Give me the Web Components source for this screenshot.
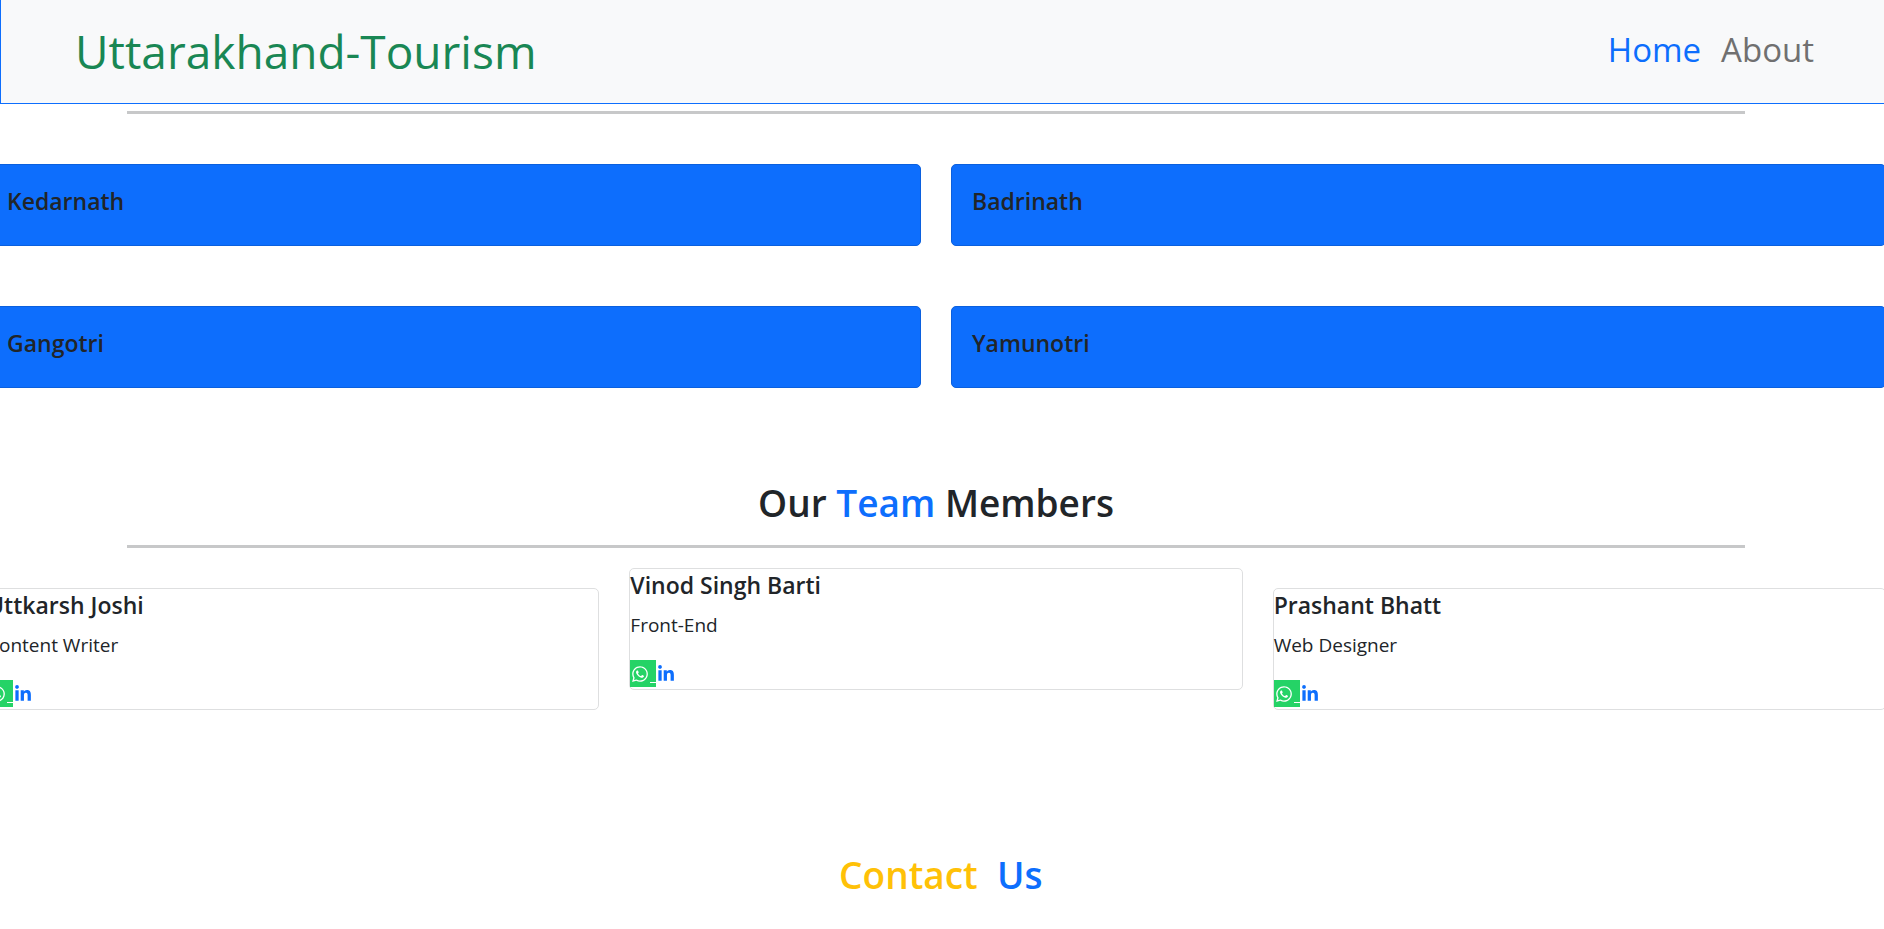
<!DOCTYPE html>
<html lang="en">
<head>
<meta charset="utf-8">
<title>Uttarakhand-Tourism</title>
<style>
  html { overflow-x: clip; background: #fff; }
  body {
    margin: 0;
    overflow-x: clip;
    color: #212529;
    font: 400 19px/30px "Open Sans", "Noto Sans", sans-serif;
    --blue: #0d6efd;
    --green: #198754;
    --yellow: #ffc107;
    --bleed: -14px;
    --gap: 30px;
  }
</style>
</head>
<body>

<template id="site-header">
  <style>
    :host { display: block; }
    header {
      display: flex;
      align-items: center;
      justify-content: space-between;
      padding: 14px 70px 14px 74px;
      background: #f8f9fa;
      border: solid var(--blue);
      border-width: 0 0 1px 1px;
    }
    a { text-decoration: none; }
    .brand { color: var(--green); font-size: 46px; line-height: 75px; }
    nav { display: flex; gap: 20px; padding-bottom: 4px; }
    ::slotted(a) { font-size: 33px; line-height: 50px; text-decoration: none; color: #707070; }
    ::slotted(a[aria-current]) { color: var(--blue); }
  </style>
  <header>
    <a class="brand" href="#">Uttarakhand-Tourism</a>
    <nav aria-label="Main"><slot></slot></nav>
  </header>
</template>

<template id="section-rule">
  <style>
    :host { display: block; padding: 0 127px; }
    hr { margin: 0; border: 0; height: 3px; background: #c7c8c9; }
  </style>
  <hr>
</template>

<template id="section-title">
  <style>
    :host { display: block; text-align: center; }
    h2 { margin: 0; font-size: 37px; font-weight: 600; line-height: 48px; }
  </style>
  <h2><slot></slot></h2>
</template>

<template id="place-grid">
  <style>
    :host {
      display: grid;
      grid-template-columns: 1fr 1fr;
      gap: 60px var(--gap);
      margin: 50px var(--bleed) 91px;
    }
  </style>
  <slot></slot>
</template>

<template id="place-card">
  <style>
    :host {
      display: block;
      box-sizing: border-box;
      padding: 20px 20px 28px;
      background: var(--blue);
      border: 1px solid #0b60de;
      border-radius: 5px;
    }
    h5 { margin: 0; font-size: 23px; font-weight: 600; line-height: 32px; }
  </style>
  <h5><slot></slot></h5>
</template>

<template id="team-row">
  <style>
    :host {
      display: grid;
      grid-template-columns: repeat(3, 1fr);
      align-items: start;
      gap: var(--gap);
      margin: 20px var(--bleed) 141px;
    }
    ::slotted(:not([raised])) { margin-top: 20px; }
  </style>
  <slot></slot>
</template>

<template id="team-card">
  <style>
    :host { display: block; border: 1px solid #dedfe0; border-radius: 5px; }
    h5 { margin: 0 0 9px; font-size: 23px; font-weight: 600; line-height: 32px; }
    p { margin: 0 0 19px; }
    .links { display: flex; gap: 2px; padding: 1px 0 2px; }
    a { display: flex; align-items: center; height: 27px; }
    svg { display: block; width: 16px; height: 18px; fill: currentColor; }
    .whatsapp { box-sizing: border-box; width: 26px; padding-left: 2px; gap: 2px; background: #25d366; color: #fff; }
    .whatsapp span { width: 6px; height: 18px; border-bottom: 1px solid; }
    .linkedin { color: var(--blue); }
  </style>
  <h5><slot name="name"></slot></h5>
  <p><slot name="role"></slot></p>
  <div class="links">
    <a class="whatsapp" href="#" aria-label="WhatsApp">
      <svg viewBox="0 0 448 512" aria-hidden="true"><path d="M380.9 97.1C339 55.1 283.2 32 223.9 32c-122.4 0-222 99.6-222 222 0 39.1 10.2 77.3 29.6 111L0 480l117.7-30.9c32.4 17.7 68.9 27 106.1 27h.1c122.3 0 224.1-99.6 224.1-222 0-59.3-25.2-115-67.1-157zm-157 341.6c-33.2 0-65.7-8.9-94-25.7l-6.7-4-69.8 18.3L72 359.2l-4.4-7c-18.5-29.4-28.2-63.3-28.2-98.2 0-101.7 82.8-184.5 184.6-184.5 49.3 0 95.6 19.2 130.4 54.1 34.8 34.9 56.2 81.2 56.1 130.5 0 101.8-84.9 184.6-186.6 184.6zm101.2-138.2c-5.5-2.8-32.8-12.1-37.9-13.9-5.1-1.9-8.8-2.8-12.5 2.8-3.7 5.6-14.3 18-17.6 21.8-3.2 3.7-6.5 4.2-12 1.4-32.6-16.3-54-29.1-75.5-66-5.7-9.8 5.7-9.1 16.3-30.3 1.8-3.7.9-6.9-.5-9.7-1.4-2.8-12.5-30.1-17.1-41.2-4.5-10.8-9.1-9.3-12.5-9.5-3.2-.2-6.9-.2-10.6-.2-3.7 0-9.7 1.4-14.8 6.9-5.1 5.6-19.4 19-19.4 46.3 0 27.3 19.9 53.7 22.6 57.4 2.8 3.7 39.1 59.7 94.8 83.8 35.2 15.2 49 16.5 66.6 13.9 10.7-1.6 32.8-13.4 37.4-26.4 4.6-13 4.6-24.1 3.2-26.4-1.3-2.5-5-3.9-10.5-6.6z"/></svg>
      <span></span>
    </a>
    <a class="linkedin" href="#" aria-label="LinkedIn">
      <svg viewBox="0 0 448 512" aria-hidden="true"><path d="M100.28 448H7.4V148.9h92.88zM53.79 108.1C24.09 108.1 0 83.5 0 53.8a53.79 53.79 0 0 1 107.58 0c0 29.7-24.1 54.3-53.79 54.3zM447.9 448h-92.68V302.4c0-34.7-.7-79.2-48.29-79.2-48.29 0-55.69 37.7-55.69 76.7V448h-92.78V148.9h89.08v40.8h1.3c12.4-23.5 42.69-48.3 87.88-48.3 94 0 111.28 61.9 111.28 142.3V448z"/></svg>
    </a>
  </div>
</template>

<template id="tourism-page">
  <style>
    :host { display: block; }
    main { padding-top: 7px; margin-right: 12px; }
    section-title + section-rule { margin-top: 18px; }
    .accent { color: var(--blue); }
    .warm { color: var(--yellow); }
    .last { padding-bottom: 30px; }
  </style>
  <site-header>
    <a href="#" aria-current="page">Home</a>
    <a href="#about">About</a>
  </site-header>
  <main>
    <section-rule></section-rule>
    <place-grid>
      <place-card>Kedarnath</place-card>
      <place-card>Badrinath</place-card>
      <place-card>Gangotri</place-card>
      <place-card>Yamunotri</place-card>
    </place-grid>
    <section-title>Our <span class="accent">Team</span> Members</section-title>
    <section-rule></section-rule>
    <team-row>
      <team-card><span slot="name">Uttkarsh Joshi</span><span slot="role">Content Writer</span></team-card>
      <team-card raised><span slot="name">Vinod Singh Barti</span><span slot="role">Front-End</span></team-card>
      <team-card><span slot="name">Prashant Bhatt</span><span slot="role">Web Designer</span></team-card>
    </team-row>
    <section-title class="last"><span class="warm">&nbsp;Contact</span> &nbsp;<span class="accent">Us</span></section-title>
  </main>
</template>

<tourism-page></tourism-page>

<script>
  class TemplateElement extends HTMLElement {
    constructor() {
      super();
      const template = document.getElementById(this.localName);
      this.attachShadow({ mode: "open" }).append(template.content.cloneNode(true));
    }
  }
  class SiteHeader extends TemplateElement {}
  class SectionRule extends TemplateElement {}
  class SectionTitle extends TemplateElement {}
  class PlaceGrid extends TemplateElement {}
  class PlaceCard extends TemplateElement {}
  class TeamRow extends TemplateElement {}
  class TeamCard extends TemplateElement {}
  class TourismPage extends TemplateElement {}

  customElements.define("site-header", SiteHeader);
  customElements.define("section-rule", SectionRule);
  customElements.define("section-title", SectionTitle);
  customElements.define("place-grid", PlaceGrid);
  customElements.define("place-card", PlaceCard);
  customElements.define("team-row", TeamRow);
  customElements.define("team-card", TeamCard);
  customElements.define("tourism-page", TourismPage);
</script>
</body>
</html>
